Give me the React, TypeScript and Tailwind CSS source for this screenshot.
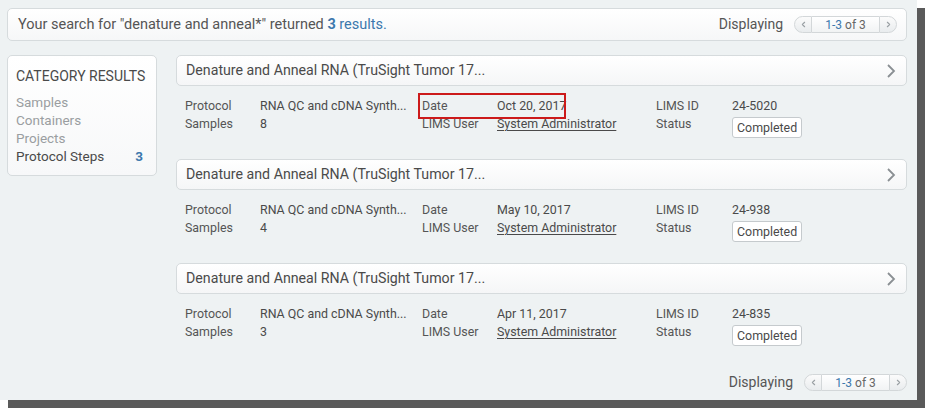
import { ChevronLeft, ChevronRight } from 'lucide-react';

type Result = {
  date: string;
  samples: string;
  limsId: string;
  highlight?: boolean;
};

const results: Result[] = [
  { date: 'Oct 20, 2017', samples: '8', limsId: '24-5020', highlight: true },
  { date: 'May 10, 2017', samples: '4', limsId: '24-938' },
  { date: 'Apr 11, 2017', samples: '3', limsId: '24-835' },
];

function Pager() {
  return (
    <div className="flex items-center h-[17px] text-[12px]">
      <div className="w-[18px] h-full flex items-center justify-center rounded-l-full border border-[#d3d7d9] bg-gradient-to-b from-[#fbfbfb] to-[#e9ecee] text-[#9aa0a4]">
        <ChevronLeft className="w-[9px] h-[9px]" strokeWidth={3} />
      </div>
      <div className="w-[67px] h-full flex items-center justify-center border-y border-[#d3d7d9] bg-gradient-to-b from-white to-[#f1f3f4] text-[#666]">
        <span className="text-[#3b78ad]">1-3</span>
        <span className="ml-[3px]">of 3</span>
      </div>
      <div className="w-[18px] h-full flex items-center justify-center rounded-r-full border border-[#d3d7d9] bg-gradient-to-b from-[#fbfbfb] to-[#e9ecee] text-[#9aa0a4]">
        <ChevronRight className="w-[9px] h-[9px]" strokeWidth={3} />
      </div>
    </div>
  );
}

function ResultCard({ r }: { r: Result }) {
  return (
    <div className="h-[104px]">
      <div className="h-[31px] flex items-center justify-between pl-[9px] pr-[10px] rounded-[5px] border border-[#d6dbdd] bg-gradient-to-b from-white to-[#f5f6f7] text-[14.2px] text-[#4a4a4a]">
        <span>Denature and Anneal RNA (TruSight Tumor 17...</span>
        <svg width="10" height="16" viewBox="0 0 10 16" className="text-[#8a8f93]">
          <polyline points="2,2 8,8 2,14" fill="none" stroke="currentColor" strokeWidth="1.8" />
        </svg>
      </div>
      <div className="grid grid-cols-[75px_162px_75px_159px_76px_1fr] pl-[9px] pt-[11px] text-[12.4px] leading-[18px] text-[#555]">
        <div>Protocol</div>
        <div className="text-[#4a4a4a]">RNA QC and cDNA Synth...</div>
        <div className="relative">
          Date
          {r.highlight && (
            <div className="absolute left-[-4px] top-[-4px] w-[148px] h-[26px] border-2 border-[#cc1a1a]" />
          )}
        </div>
        <div className="text-[#4a4a4a]">{r.date}</div>
        <div>LIMS ID</div>
        <div className="text-[#4a4a4a]">{r.limsId}</div>
        <div>Samples</div>
        <div className="text-[#4a4a4a]">{r.samples}</div>
        <div>LIMS User</div>
        <div className="text-[#4a4a4a] underline underline-offset-2">System Administrator</div>
        <div>Status</div>
        <div>
          <span className="inline-flex items-center mt-[2px] h-[21px] px-[4px] rounded-[3px] border border-[#c5cacd] bg-white text-[#4a4a4a]">
            Completed
          </span>
        </div>
      </div>
    </div>
  );
}

export default function App() {
  return (
    <div className="w-[932px] h-[415px] bg-white" style={{ fontFamily: 'Roboto, "Liberation Sans", sans-serif' }}>
      <div className="w-[917px] h-[400px] bg-[#eef2f3] shadow-[8px_8px_0_0_#5a5a5a] pt-[8px] pl-[7px] pr-[10px]">
        {/* Search summary */}
        <div className="h-[33px] flex items-center justify-between pl-[10px] pr-[9px] rounded-[5px] border border-[#d6dbdd] bg-gradient-to-b from-white to-[#f6f7f8] text-[14.5px] text-[#555]">
          <div>
            Your search for "denature and anneal*" returned{' '}
            <span className="text-[#3b78ad] font-bold">3</span>{' '}
            <span className="text-[#3b78ad]">results.</span>
          </div>
          <div className="flex items-center gap-[11px] text-[14px]">
            <span>Displaying</span>
            <Pager />
          </div>
        </div>

        <div className="flex gap-[19px] mt-[14px]">
          {/* Category sidebar */}
          <div className="w-[150px] h-[121px] shrink-0 rounded-[5px] border border-[#d6dbdd] bg-gradient-to-b from-white to-[#f7f8f9] pl-[8px] pr-[13px] pt-[10px]">
            <div className="text-[14px] text-[#4a4a4a] leading-[20px] whitespace-nowrap">CATEGORY RESULTS</div>
            <div className="mt-[7px] text-[13.5px] leading-[18px] text-[#9a9ea1]">
              <div>Samples</div>
              <div>Containers</div>
              <div>Projects</div>
              <div className="flex justify-between text-[#4a4a4a]">
                <span>Protocol Steps</span>
                <span className="text-[#3b78ad] font-bold">3</span>
              </div>
            </div>
          </div>

          {/* Results */}
          <div className="flex-1">
            {results.map((r) => (
              <ResultCard key={r.limsId} r={r} />
            ))}
            <div className="flex justify-end items-center gap-[11px] mt-[5px] text-[14px] text-[#555]">
              <span>Displaying</span>
              <Pager />
            </div>
          </div>
        </div>
      </div>
    </div>
  );
}
